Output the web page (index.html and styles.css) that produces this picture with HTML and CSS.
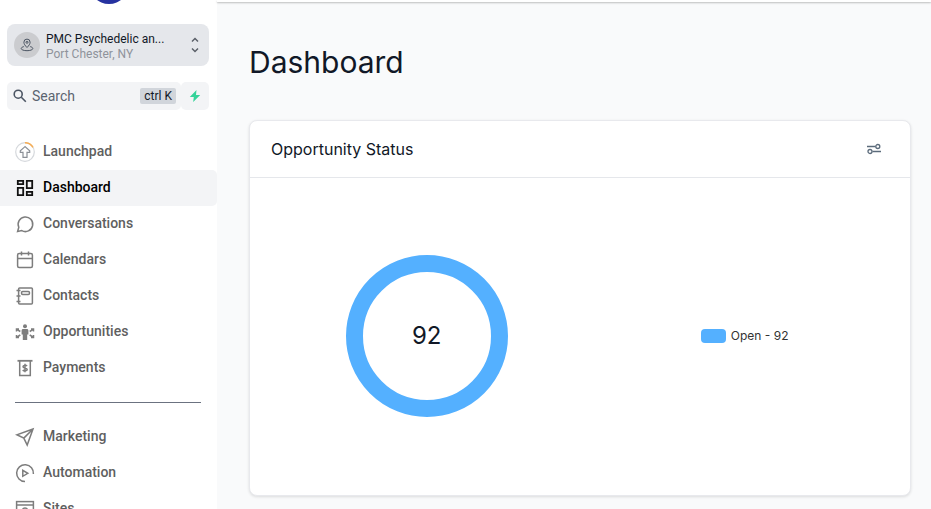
FILE: index.html
```html
<!DOCTYPE html>
<html lang="en">
<head>
    <meta charset="UTF-8">
    <meta name="viewport" content="width=device-width, initial-scale=1.0">
    <title>Dashboard</title>
    <link rel="stylesheet" href="styles.css">
</head>
<body>

    <aside class="sidebar">
        <div class="logo-row"><div class="logo"></div></div>

        <button class="location" type="button">
            <span class="location-icon">
                <svg width="14" height="14" viewBox="0 0 14 14">
                    <path d="M7 9.500C5 7.500 3.900 6 3.900 4.200a3.100 3.100 0 0 1 6.200 0C10.100 6 9 7.500 7 9.500z"/>
                    <circle cx="7" cy="4.300" r="1"/>
                    <path d="M3.800 8.600C2.200 9 1.200 9.700 1.200 10.500c0 1.300 2.600 2.200 5.800 2.200s5.800-.900 5.800-2.200c0-.900-1.100-1.600-2.600-1.900"/>
                </svg>
            </span>
            <span class="location-text">
                <span class="location-name">PMC Psychedelic an...</span>
                <span class="location-city">Port Chester, NY</span>
            </span>
            <svg class="location-arrows" width="8" height="16" viewBox="0 0 8 16">
                <path d="M1 4.500l3-3 3 3M1 11.500l3 3 3-3"/>
            </svg>
        </button>

        <div class="search-row">
            <div class="search">
                <svg class="search-icon" width="14" height="14" viewBox="0 0 14 14">
                    <circle cx="5.200" cy="5.200" r="4"/>
                    <path d="M8.300 8.300l4.500 4.500"/>
                </svg>
                <input type="text" class="search-input" placeholder="Search" aria-label="Search">
                <kbd class="shortcut">ctrl K</kbd>
            </div>
            <button class="quick" type="button" aria-label="Quick actions">
                <svg width="12" height="14" viewBox="0 0 12 14">
                    <path d="M7.500 1L.800 8h4l-.600 5L11.200 5.900h-4.200z"/>
                </svg>
            </button>
        </div>

        <nav class="menu">
            <a href="#" class="menu-item">
                <svg class="icon" viewBox="0 0 20 20">
                    <circle class="track" cx="10" cy="10" r="9.300"/>
                    <path class="progress" d="M10 .700a9.300 9.300 0 0 1 8 4.600"/>
                    <path class="arrow" d="M10 4.600L5.300 8.700v1.700h2.700V15.300h4v-4.900h2.700V8.700z"/>
                </svg>
                Launchpad
            </a>
            <a href="#" class="menu-item active">
                <svg class="icon" viewBox="0 0 20 20">
                    <path class="thick" d="M2.800 2.800h5.400v3.400H2.800zM11.800 2.800h5.400v7.400h-5.400zM2.800 9.800h5.400v7.400H2.800zM11.800 13.800h5.400v3.400h-5.400z"/>
                </svg>
                Dashboard
            </a>
            <a href="#" class="menu-item">
                <svg class="icon" viewBox="0 0 20 20">
                    <path d="M3.800 13.300A7.300 7.300 0 1 1 6.800 16.600L2.600 17.500z"/>
                </svg>
                Conversations
            </a>
            <a href="#" class="menu-item">
                <svg class="icon" viewBox="0 0 20 20">
                    <rect x="2.600" y="3.600" width="14.800" height="14" rx="1.500"/>
                    <path d="M2.600 8.500h14.800M6.500 1.500v4M13.500 1.500v4"/>
                </svg>
                Calendars
            </a>
            <a href="#" class="menu-item">
                <svg class="icon" viewBox="0 0 20 20">
                    <rect x="3.600" y="2" width="13.800" height="16" rx="1"/>
                    <rect x="6.500" y="5.500" width="8" height="3" rx="1.200"/>
                    <path d="M1.500 4.500h4M1.500 10h4M1.500 15.500h4"/>
                </svg>
                Contacts
            </a>
            <a href="#" class="menu-item">
                <svg class="icon" viewBox="0 0 20 20">
                    <circle class="solid" cx="10" cy="4.300" r="2"/>
                    <path class="solid" d="M8.200 7h3.600c1 0 1.600.700 1.600 1.600v3.900H12.200V18H7.800v-5.500H6.600V8.600c0-.900.600-1.600 1.600-1.600z"/>
                    <path d="M5.300 9.500L1.800 7.300M1.500 9.500V7h2.500M14.700 9.500l3.500-2.200M18.500 9.500V7h-2.500M5.300 13l-3.500 2.200M1.500 13v2.500h2.500M14.700 13l3.500 2.200M18.500 13v2.500h-2.500"/>
                </svg>
                Opportunities
            </a>
            <a href="#" class="menu-item">
                <svg class="icon" viewBox="0 0 20 20">
                    <path class="thick" d="M2.500 2.800h15"/>
                    <path d="M4.700 3v14.500h10.600V3"/>
                    <path d="M12 8C11.500 7.200 8 6.900 8 8.700c0 1.700 4.200.900 4.200 2.800 0 1.800-3.800 1.500-4.400.500M10 5.800v8.500"/>
                </svg>
                Payments
            </a>
            <hr class="divider">
            <a href="#" class="menu-item">
                <svg class="icon" viewBox="0 0 20 20">
                    <path d="M18 2L1.800 7.800l7 3.300 3.400 6.900zM8.800 11.100L18 2"/>
                </svg>
                Marketing
            </a>
            <a href="#" class="menu-item">
                <svg class="icon" viewBox="0 0 20 20">
                    <path d="M10 18.500A8.400 8.400 0 1 1 18.400 11"/>
                    <path d="M7.800 7.300v6l5-3z"/>
                </svg>
                Automation
            </a>
            <a href="#" class="menu-item">
                <svg class="icon" viewBox="0 0 20 20">
                    <rect x="1.600" y="2.600" width="16.800" height="14.800"/>
                    <path d="M1.600 6h16.800"/>
                    <circle cx="10" cy="11.500" r="2.500"/>
                </svg>
                Sites
            </a>
        </nav>
    </aside>

    <div class="content">
        <header class="topbar"></header>
        <main class="main">
            <h1 class="title">Dashboard</h1>

            <section class="card">
                <div class="card-header">
                    <h2 class="card-title">Opportunity Status</h2>
                    <button class="filter" type="button" aria-label="Card settings">
                        <svg width="14" height="12" viewBox="0 0 14 12">
                            <path d="M0 3.500h8.500M5.500 8.500H14"/>
                            <circle cx="10.800" cy="3.500" r="2"/>
                            <circle cx="3" cy="8.500" r="2"/>
                        </svg>
                    </button>
                </div>
                <div class="card-body">
                    <div class="donut">92</div>
                    <div class="legend">
                        <span class="swatch"></span>
                        Open - 92
                    </div>
                </div>
            </section>
        </main>
    </div>

</body>
</html>
```

FILE: styles.css
```css
* {
    box-sizing: border-box;
}
body {
    margin: 0;
    display: flex;
    height: 100vh;
    overflow: hidden;
    font-family: Roboto, sans-serif;
    background-color: #f9fafb;
}
button {
    border: none;
    padding: 0;
    font-family: inherit;
    text-align: left;
    cursor: pointer;
}
svg {
    fill: none;
    stroke: currentColor;
    flex-shrink: 0;
}

/* Sidebar */
.sidebar {
    width: 217px;
    flex-shrink: 0;
    overflow: hidden;
    background-color: #fff;
}
.logo-row {
    display: flex;
    align-items: flex-end;
    justify-content: center;
    height: 4px;
    margin-bottom: 20px;
    overflow: hidden;
}
.logo {
    width: 40px;
    height: 40px;
    flex-shrink: 0;
    border-radius: 50%;
    background-color: #2632a0;
}
.location {
    display: flex;
    align-items: center;
    width: 202px;
    height: 42px;
    margin: 0 8px 16px 7px;
    padding: 0 10px 0 7px;
    border-radius: 8px;
    background-color: #e5e7eb;
}
.location-icon {
    display: flex;
    align-items: center;
    justify-content: center;
    width: 26px;
    height: 26px;
    margin-right: 6px;
    border-radius: 50%;
    background-color: #cbcccf;
    color: #4b5563;
}
.location-text {
    flex: 1;
    padding-top: 3px;
    font-size: 12px;
    line-height: 15px;
}
.location-name, .location-city {
    display: block;
}
.location-name {
    color: #111827;
}
.location-city {
    color: #8f939b;
}
.location-arrows {
    color: #5b6069;
    stroke-width: 1.5;
}
.search-row {
    display: flex;
    margin: 0 8px 24px 7px;
}
.search {
    display: flex;
    align-items: center;
    flex: 1;
    min-width: 0;
    height: 28px;
    padding: 0 5px 0 6px;
    border-radius: 5px;
    background-color: #f3f4f6;
}
.search-icon {
    color: #4b5563;
    stroke-width: 1.6;
}
.search-input {
    flex: 1;
    min-width: 0;
    padding: 0 5px 1px;
    border: none;
    outline: none;
    background: none;
    font-family: inherit;
    font-size: 14px;
}
.search-input::placeholder {
    color: #5b6470;
}
.shortcut {
    padding: 0 4px;
    border-radius: 2px;
    background-color: #d1d5db;
    font-family: inherit;
    font-size: 12px;
    line-height: 16px;
    color: #111827;
}
.quick {
    display: flex;
    align-items: center;
    justify-content: center;
    width: 28px;
    border-radius: 5px;
    background-color: #f3f4f6;
}
.quick path {
    fill: #34d399;
    stroke: none;
}

/* Menu */
.menu-item {
    display: flex;
    align-items: center;
    height: 36px;
    padding: 0 15px 2px;
    gap: 8px;
    border-radius: 0 5px 5px 0;
    font-size: 14px;
    font-weight: 500;
    line-height: 20px;
    color: #5f5f5f;
    text-decoration: none;
}
.menu-item.active {
    background-color: #f3f4f6;
    color: #000;
}
.icon {
    width: 20px;
    height: 20px;
    margin-top: 2px;
    stroke-width: 1.5;
    color: #7d7d7d;
}
.active .icon {
    color: #111;
}
.icon .thick {
    stroke-width: 1.8;
}
.icon .solid {
    fill: currentColor;
    stroke: none;
}
.icon .track {
    stroke: #d5d8dc;
    stroke-width: 1.2;
}
.icon .progress {
    stroke: #f6ad55;
}
.icon .arrow {
    stroke: #8b9097;
    stroke-width: 1.2;
}
.divider {
    height: 1px;
    margin: 16px 16px 16px 15px;
    border: none;
    background-color: #6b7280;
}

/* Content */
.content {
    flex: 1;
    min-width: 0;
    font-family: Inter, sans-serif;
    color: #111827;
}
.topbar {
    height: 2px;
    background-color: #fff;
    box-shadow: 0 1px 2px rgba(0, 0, 0, 0.25);
}
.main {
    padding: 40px 20px 12px 32px;
}
.title {
    margin: 0 0 38px;
    font-size: 30px;
    font-weight: 400;
    line-height: 40px;
}
.card {
    border: 1px solid #e8e9ed;
    border-radius: 8px;
    background-color: #fff;
    box-shadow: 0 1px 3px rgba(0, 0, 0, 0.12);
}
.card-header {
    display: flex;
    align-items: center;
    justify-content: space-between;
    height: 57px;
    padding: 0 29px 0 21px;
    border-bottom: 1px solid #e5e7eb;
}
.card-title {
    margin: 0;
    font-size: 16px;
    font-weight: 400;
    line-height: 24px;
}
.filter {
    display: flex;
    background: none;
    color: #5b6b7b;
}
.filter svg {
    stroke-width: 1.3;
}
.card-body {
    display: grid;
    grid-template-columns: 5fr 4fr;
    align-items: center;
    justify-items: center;
    height: 317px;
    padding: 0 24px 2px 0;
}
.donut {
    display: flex;
    align-items: center;
    justify-content: center;
    width: 162px;
    height: 162px;
    border: 17px solid #54b0ff;
    border-radius: 50%;
    font-size: 24px;
}
.legend {
    display: flex;
    align-items: center;
    gap: 5px;
    font-size: 12px;
    color: #333;
}
.swatch {
    width: 25px;
    height: 14px;
    border-radius: 4px;
    background-color: #54b0ff;
}
```
